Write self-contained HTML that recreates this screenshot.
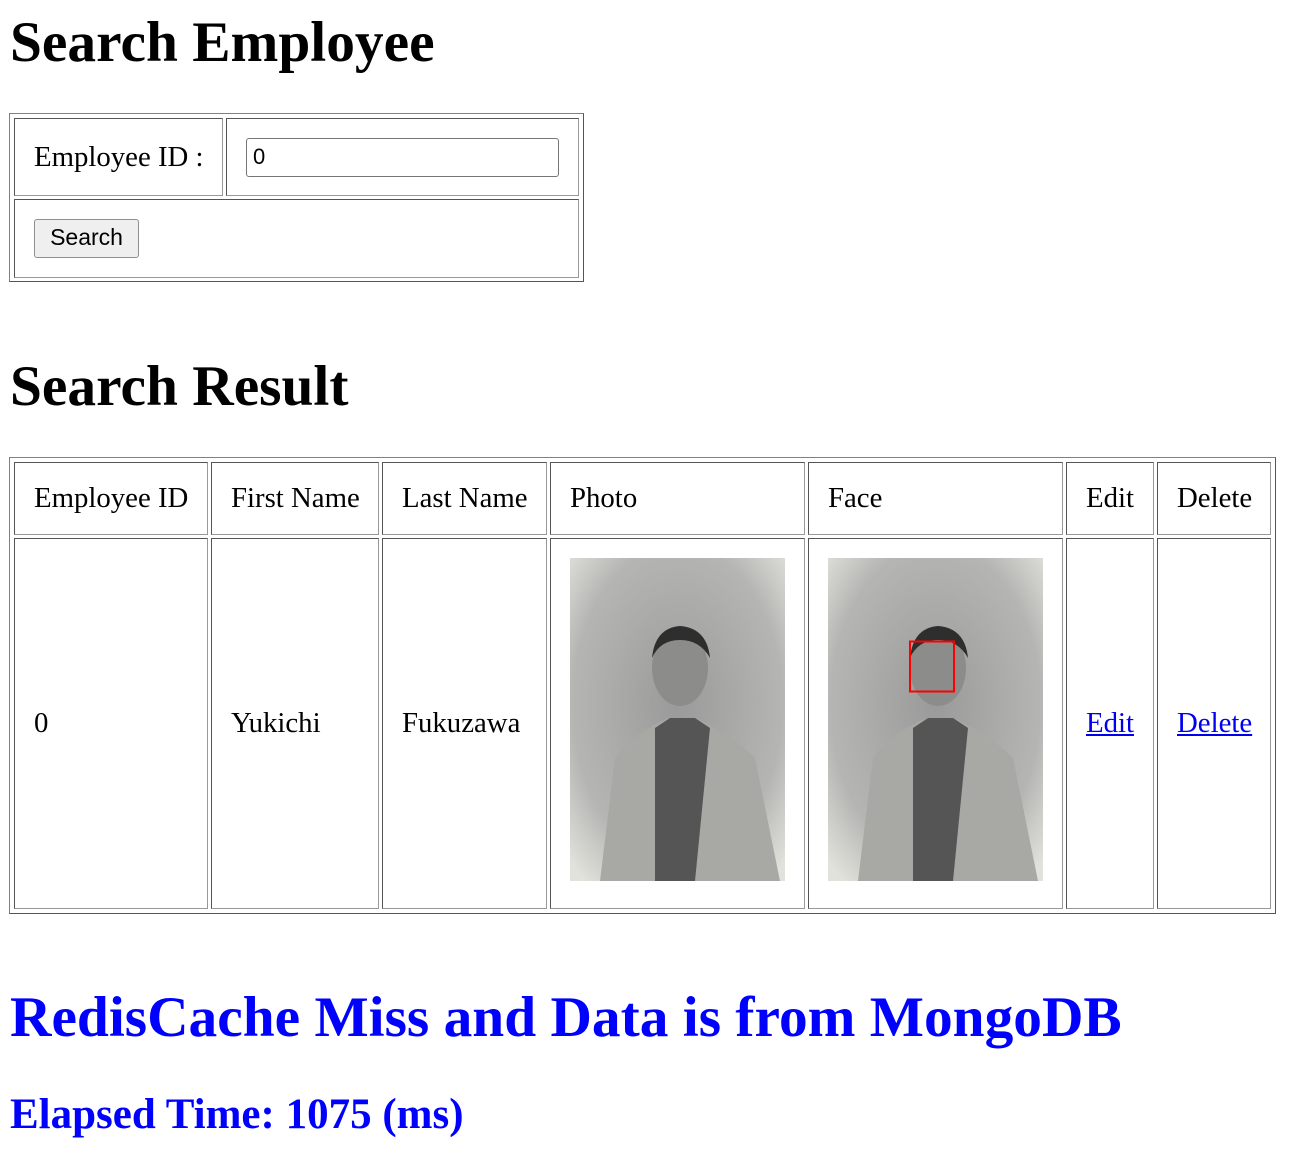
<!DOCTYPE html>
<html><head><meta charset="utf-8"><style>
body{margin:0;width:1314px;height:1164px;background:#fff;font-family:"Liberation Serif",serif;position:relative;overflow:hidden}
.a{position:absolute;box-sizing:border-box}
.h{font-weight:bold;font-size:57.4px;line-height:60px;white-space:nowrap}
.o{border:1px solid #808080;border-right-color:#555;border-bottom-color:#555}
.c{border:1px solid #555;border-right-color:#999;border-bottom-color:#999}
.t{font-size:28.8px;line-height:30px;white-space:nowrap}
a{color:#0000ee}
</style></head><body>
<div class="a h" style="left:10px;top:13px">Search Employee</div>
<div class="a o" style="left:9px;top:113px;width:575px;height:169px"></div>
<div class="a c" style="left:14px;top:118px;width:209px;height:78px"></div>
<div class="a c" style="left:226px;top:118px;width:353px;height:78px"></div>
<div class="a c" style="left:14px;top:199px;width:565px;height:79px"></div>
<div class="a t" style="left:34px;top:142px">Employee ID :</div>
<div class="a" style="left:246px;top:138px;width:313px;height:39px;border:1px solid #767676;border-radius:3px;font-family:'Liberation Sans',sans-serif;font-size:22px;line-height:35px;padding-left:6px">0</div>
<div class="a" style="left:34px;top:219px;width:105px;height:39px;border:1px solid #8f8f8f;border-radius:3px;background:#efefef;font-family:'Liberation Sans',sans-serif;font-size:23px;line-height:35px;text-align:center">Search</div>

<div class="a h" style="left:10px;top:357px">Search Result</div>
<div class="a o" style="left:9px;top:457px;width:1267px;height:457px"></div>
<div class="a c" style="left:14px;top:462px;width:194px;height:73px"></div>
<div class="a c" style="left:211px;top:462px;width:168px;height:73px"></div>
<div class="a c" style="left:382px;top:462px;width:165px;height:73px"></div>
<div class="a c" style="left:550px;top:462px;width:255px;height:73px"></div>
<div class="a c" style="left:808px;top:462px;width:255px;height:73px"></div>
<div class="a c" style="left:1066px;top:462px;width:88px;height:73px"></div>
<div class="a c" style="left:1157px;top:462px;width:114px;height:73px"></div>
<div class="a c" style="left:14px;top:538px;width:194px;height:371px"></div>
<div class="a c" style="left:211px;top:538px;width:168px;height:371px"></div>
<div class="a c" style="left:382px;top:538px;width:165px;height:371px"></div>
<div class="a c" style="left:550px;top:538px;width:255px;height:371px"></div>
<div class="a c" style="left:808px;top:538px;width:255px;height:371px"></div>
<div class="a c" style="left:1066px;top:538px;width:88px;height:371px"></div>
<div class="a c" style="left:1157px;top:538px;width:114px;height:371px"></div>
<div class="a t" style="left:34px;top:483px">Employee ID</div>
<div class="a t" style="left:231px;top:483px">First Name</div>
<div class="a t" style="left:402px;top:483px">Last Name</div>
<div class="a t" style="left:570px;top:483px">Photo</div>
<div class="a t" style="left:828px;top:483px">Face</div>
<div class="a t" style="left:1086px;top:483px">Edit</div>
<div class="a t" style="left:1177px;top:483px">Delete</div>
<div class="a t" style="left:34px;top:708px">0</div>
<div class="a t" style="left:231px;top:708px">Yukichi</div>
<div class="a t" style="left:402px;top:708px">Fukuzawa</div>
<div class="a t" style="left:1086px;top:708px"><a href="#">Edit</a></div>
<div class="a t" style="left:1177px;top:708px"><a href="#">Delete</a></div>

<svg class="a" style="left:570px;top:558px" width="215" height="323" viewBox="0 0 215 323">
<defs><radialGradient id="g" cx="50%" cy="45%" r="70%"><stop offset="0" stop-color="#9a9a9a"/><stop offset="0.7" stop-color="#b5b5b3"/><stop offset="1" stop-color="#e2e2dc"/></radialGradient></defs>
<rect width="215" height="323" fill="url(#g)"/>
<path d="M30 323 L45 200 Q70 170 100 160 L125 160 Q160 175 185 200 L210 323Z" fill="#a8a8a4"/>
<path d="M85 170 L100 160 L125 160 L140 170 L125 323 L85 323Z" fill="#555"/>
<ellipse cx="110" cy="110" rx="28" ry="38" fill="#8c8c8a"/>
<path d="M82 100 Q85 70 110 68 Q137 70 140 100 Q130 82 110 82 Q90 82 82 100Z" fill="#2e2e2e"/>
</svg>
<svg class="a" style="left:828px;top:558px" width="215" height="323" viewBox="0 0 215 323">
<rect width="215" height="323" fill="url(#g)"/>
<path d="M30 323 L45 200 Q70 170 100 160 L125 160 Q160 175 185 200 L210 323Z" fill="#a8a8a4"/>
<path d="M85 170 L100 160 L125 160 L140 170 L125 323 L85 323Z" fill="#555"/>
<ellipse cx="110" cy="110" rx="28" ry="38" fill="#8c8c8a"/>
<path d="M82 100 Q85 70 110 68 Q137 70 140 100 Q130 82 110 82 Q90 82 82 100Z" fill="#2e2e2e"/>
<rect x="82" y="83.5" width="44" height="50" fill="none" stroke="#f00" stroke-width="2"/>
</svg>

<div class="a h" style="left:10px;top:988px;color:#0000ff">RedisCache Miss and Data is from MongoDB</div>
<div class="a" style="left:10px;top:1091px;color:#0000ff;font-weight:bold;font-size:43px;line-height:48px;white-space:nowrap">Elapsed Time: 1075 (ms)</div>
</body></html>
